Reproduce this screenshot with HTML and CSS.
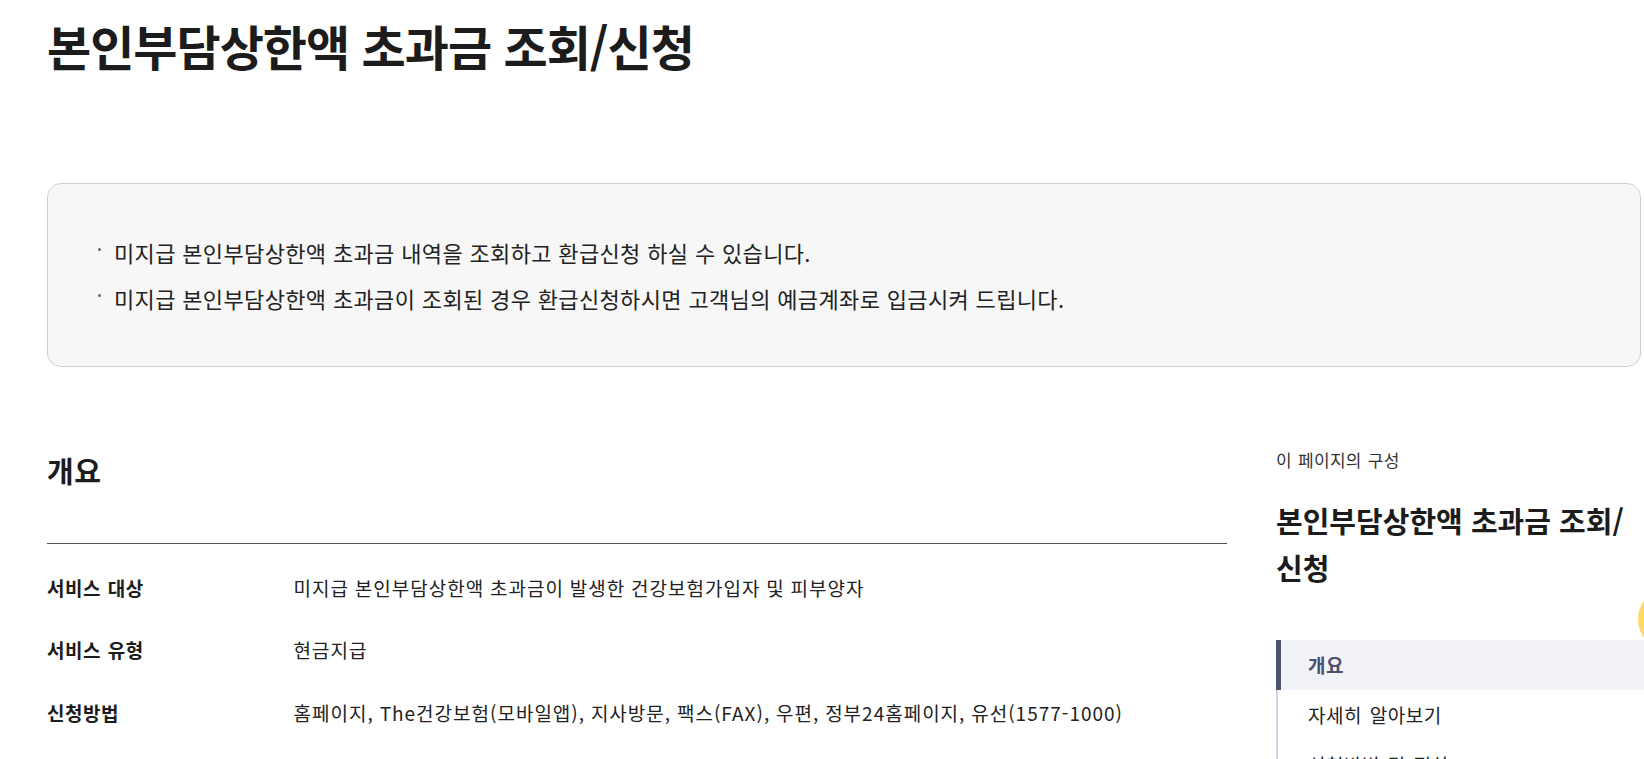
FILE: index.html
```html
<!DOCTYPE html>
<html lang="ko">
<head>
<meta charset="utf-8">
<title>본인부담상한액 초과금 조회/신청</title>
<link rel="stylesheet" href="styles.css">
</head>
<body>
<div class="page">
  <h1 class="page-title">본인부담상한액 초과금 조회/신청</h1>

  <div class="notice">
    <ul class="notice-list">
      <li>미지급 본인부담상한액 초과금 내역을 조회하고 환급신청 하실 수 있습니다.</li>
      <li>미지급 본인부담상한액 초과금이 조회된 경우 환급신청하시면 고객님의 예금계좌로 입금시켜 드립니다.</li>
    </ul>
  </div>

  <div class="content">
    <main class="main">
      <h2 class="section-title">개요</h2>
      <dl class="info">
        <div class="info-row">
          <dt>서비스 대상</dt>
          <dd>미지급 본인부담상한액 초과금이 발생한 건강보험가입자 및 피부양자</dd>
        </div>
        <div class="info-row">
          <dt>서비스 유형</dt>
          <dd>현금지급</dd>
        </div>
        <div class="info-row">
          <dt>신청방법</dt>
          <dd>홈페이지, The건강보험(모바일앱), 지사방문, 팩스(FAX), 우편, 정부24홈페이지, 유선(1577-1000)</dd>
        </div>
      </dl>
    </main>

    <aside class="toc">
      <p class="toc-label">이 페이지의 구성</p>
      <p class="toc-title">본인부담상한액 초과금 조회/신청</p>
      <ul class="toc-nav">
        <li class="toc-item active">개요</li>
        <li class="toc-item">자세히 알아보기</li>
        <li class="toc-item">신청방법 및 절차</li>
      </ul>
    </aside>
  </div>
</div>
<div class="float-btn"></div>
</body>
</html>
```

FILE: styles.css
```css
* { box-sizing: border-box; }
html, body { margin: 0; padding: 0; }
body {
  font-family: "Noto Sans CJK KR", "Noto Sans", sans-serif;
  color: #222;
  background: #fff;
  overflow: hidden;
}
.page {
  width: 1594px;
  margin-left: 47px;
}
.page-title {
  margin: 12px 0 0;
  font-size: 48px;
  line-height: 66px;
  font-weight: 700;
  letter-spacing: -1px;
  color: #1c1c1c;
}
.notice {
  margin-top: 105px;
  height: 184px;
  background: #f7f7f7;
  border: 1px solid #cfcfcf;
  border-radius: 14px;
  padding: 45px 50px;
}
.notice-list {
  list-style: none;
  margin: 0;
  padding: 0;
}
.notice-list li {
  position: relative;
  padding-left: 16px;
  font-size: 22px;
  line-height: 46px;
  letter-spacing: 0.35px;
  color: #222;
}
.notice-list li::before {
  content: "";
  position: absolute;
  left: 0;
  top: 19px;
  width: 3px;
  height: 3px;
  border-radius: 50%;
  background: #666;
}
.content {
  display: flex;
  gap: 49px;
  margin-top: 73px;
}
.main {
  width: 1180px;
  flex: none;
}
.section-title {
  margin: 10px 0 0;
  font-size: 29px;
  line-height: 40px;
  font-weight: 700;
  letter-spacing: 0.5px;
  color: #1c1c1c;
}
.info {
  margin: 53px 0 0;
  border-top: 1px solid #555;
  padding-top: 12px;
}
.info-row {
  display: flex;
  height: 62.5px;
  align-items: center;
  font-size: 19px;
}
.info-row dt {
  width: 246.6px;
  flex: none;
  font-weight: 700;
  letter-spacing: 0.5px;
  word-spacing: 1px;
  color: #1c1c1c;
}
.info-row dd {
  margin: 0;
  letter-spacing: 1px;
  word-spacing: -0.5px;
  color: #222;
}
.toc {
  flex: 1;
  min-width: 0;
}
.toc-label {
  margin: 8px 0 0;
  font-size: 17px;
  line-height: 24px;
  letter-spacing: 0.3px;
  word-spacing: 1px;
  color: #333;
}
.toc-title {
  margin: 25px 0 0;
  font-size: 29px;
  line-height: 47px;
  font-weight: 700;
  color: #1c1c1c;
  word-break: keep-all;
}
.toc-nav {
  list-style: none;
  margin: 49px -4px 0 0;
  padding: 0;
  border-left: 2px solid #cdd5e3;
}
.toc-item {
  height: 50px;
  line-height: 50px;
  padding-left: 30px;
  font-size: 19px;
  letter-spacing: 0.5px;
  word-spacing: 2px;
  color: #222;
}
.toc-item.active {
  margin-left: -2px;
  border-left: 5px solid #4e5272;
  padding-left: 27px;
  background: #f2f3f8;
  color: #4b4e6d;
  font-weight: 700;
}
.float-btn {
  position: fixed;
  right: -58px;
  top: 587px;
  width: 64px;
  height: 64px;
  border-radius: 50%;
  background: #ffd966;
}
```
